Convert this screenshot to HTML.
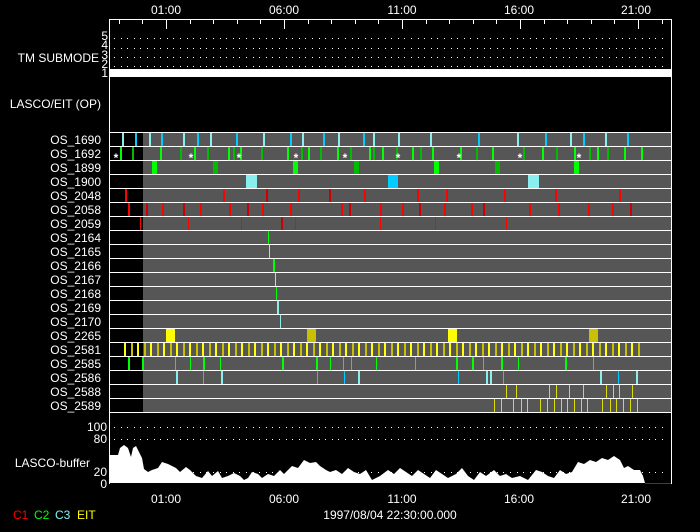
<!DOCTYPE html>
<html><head><meta charset="utf-8"><style>
html,body{margin:0;padding:0;background:#000;width:700px;height:532px;overflow:hidden}
svg{display:block}
text{font-family:"Liberation Sans",sans-serif;fill:#fff;font-size:12px}
</style></head><body>
<svg id="s" width="700" height="532" viewBox="0 0 700 532" xmlns="http://www.w3.org/2000/svg">
<rect width="700" height="532" fill="#000"/>
<g id="g"></g>
<line x1="109" y1="19.5" x2="671" y2="19.5" stroke="#fff"/>
<line x1="109.5" y1="19" x2="109.5" y2="484" stroke="#fff"/>
<line x1="671.5" y1="19" x2="671.5" y2="484" stroke="#fff"/>
<rect x="109" y="69" width="563" height="8" fill="#fff"/>
<text x="166" y="14" text-anchor="middle" font-size="13">01:00</text>
<text x="284" y="14" text-anchor="middle" font-size="13">06:00</text>
<text x="402" y="14" text-anchor="middle" font-size="13">11:00</text>
<text x="519" y="14" text-anchor="middle" font-size="13">16:00</text>
<text x="636" y="14" text-anchor="middle" font-size="13">21:00</text>
<text x="166" y="503" text-anchor="middle" font-size="13">01:00</text>
<text x="284" y="503" text-anchor="middle" font-size="13">06:00</text>
<text x="402" y="503" text-anchor="middle" font-size="13">11:00</text>
<text x="519" y="503" text-anchor="middle" font-size="13">16:00</text>
<text x="636" y="503" text-anchor="middle" font-size="13">21:00</text>
<text x="390" y="519" text-anchor="middle" font-size="13">1997/08/04 22:30:00.000</text>
<text x="99" y="62" text-anchor="end" font-size="13">TM SUBMODE</text>
<text x="101" y="108" text-anchor="end" font-size="13">LASCO/EIT (OP)</text>
<text x="108" y="40" text-anchor="end" font-size="10">5</text>
<text x="108" y="49" text-anchor="end" font-size="10">4</text>
<text x="108" y="59" text-anchor="end" font-size="10">3</text>
<text x="108" y="68" text-anchor="end" font-size="10">2</text>
<text x="108" y="77" text-anchor="end" font-size="10">1</text>
<text x="90" y="467" text-anchor="end" font-size="13">LASCO-buffer</text>
<text x="107" y="431" text-anchor="end" font-size="13">100</text>
<text x="107" y="443" text-anchor="end" font-size="13">80</text>
<text x="107" y="476" text-anchor="end" font-size="13">20</text>
<text x="107" y="488" text-anchor="end" font-size="13">0</text>
<text x="13" y="519" style="fill:#f00">C1</text>
<text x="34" y="519" style="fill:#0f0">C2</text>
<text x="55" y="519" style="fill:#8ee">C3</text>
<text x="77" y="519" style="fill:#ff0">EIT</text>
</svg>
<script>
var g=document.getElementById('g'),h='';
function R(x,y,w,hh,c){h+='<rect x="'+x+'" y="'+y+'" width="'+w+'" height="'+hh+'" fill="'+c+'"/>';}
for(var i=0;i<24;i++){var x=118.8+i*23.6;if(x>671)break;var maj=((i-2)%5==0);R(Math.round(x),20,1,maj?9:4,'#fff');}
[38,48,57,66,427,439,472].forEach(function(y){for(var x=114;x<668;x+=6.6)R(Math.round(x),y,1,1,'#fff');});
var names=['OS_1690','OS_1692','OS_1899','OS_1900','OS_2048','OS_2058','OS_2059','OS_2164','OS_2165','OS_2166','OS_2167','OS_2168','OS_2169','OS_2170','OS_2265','OS_2581','OS_2585','OS_2586','OS_2588','OS_2589'];
var t='';
for(var k=0;k<20;k++){var y=132+k*14;R(143,y,528,14,'#565656');R(109,y,563,1,'#fff');
t+='<text x="101" y="'+(y+12)+'" text-anchor="end" font-size="13">'+names[k]+'</text>';}
R(109,412,563,1,'#fff');
function row(k,list,w,col,col2){var y=133+k*14;list.forEach(function(x,i){R(x,y,w,13,(col2&&i%2)?col2:col);});}
var LC='#8ee',BC='#0cf',G='#0f0',DG='#0b0',RD='#f00',DR='#c00',Y='#ff0',OL='#c8c000';
row(0,[122,149,183,210,263,302,338,373,398,430,517,570,605],2,LC);
row(0,[135,161,197,236,290,323,363,478,545,583,627],2,BC);
row(1,[120,160,194,228,240,287,308,337,369,382,412,432,460,492,542,574,597,624,641],2,G);
row(1,[132,180,207,233,261,301,320,350,373,396,420,476,523,556,589,607],2,DG);
[116,191,239,296,345,398,459,520,579].forEach(function(x){t+='<text x="'+x+'" y="162" text-anchor="middle" font-size="11" font-weight="bold">*</text>';});
row(2,[152,293,434,574],5,G);row(2,[213,354,495],5,DG);
row(3,[246,528],11,LC);row(3,[388],10,BC);
row(4,[125,223,298,364,417,446,504,555,619],2,RD);row(4,[266,329],2,DR);
row(5,[128,162,200,229,262,290,341,380,402,444,471,529,558,588,612],2,RD);
row(5,[146,183,247,349,419,483,630],2,DR);
row(6,[140,188,241,295,380,435,506],1,RD);row(6,[281],2,DR);
row(7,[268],1,G);row(8,[269],1,LC);row(9,[273],2,G);row(10,[275],1,LC);row(11,[276],1,G);row(12,[277],2,LC);row(13,[280],1,LC);
row(14,[166,448],9,Y);row(14,[307,589],9,OL);
var yb=[];for(var x=124;x<642;x+=6.5)yb.push(Math.round(x));row(15,yb,2,Y,OL);
row(16,[128,142,203,282,316,456,472,501,565],2,G);row(16,[175,190,220,330,343,351,376,415,483,518,593],1,G);
row(17,[176,221,358,486,490,600,636],2,LC);row(17,[203,317,344,458,503,618],1,BC);
row(18,[506,516,549,556,569,583,606,613,619,632],1,'#dd0');
row(19,[494,501,513,521,527,540,547,554,561,567,574,581,587,602,610,616,623,630,637],1,'#dd0');
var pts=[[109,483],[109,455],[118,455],[120,448],[124,445],[128,448],[131,457],[133,448],[136,446],[139,452],[142,458],[144,469],[148,472],[152,470],[158,468],[162,462],[168,464],[176,468],[180,472],[186,467],[190,470],[196,476],[202,478],[208,471],[212,476],[218,471],[222,478],[228,476],[234,473],[240,476],[244,480],[248,478],[252,472],[258,474],[262,478],[268,474],[274,476],[280,470],[284,474],[288,470],[292,466],[298,468],[304,460],[310,463],[316,462],[320,466],[326,470],[330,472],[336,470],[342,474],[348,468],[354,472],[360,474],[366,470],[372,480],[380,476],[388,470],[394,474],[400,468],[406,472],[412,476],[418,470],[424,474],[430,478],[436,470],[442,474],[448,478],[456,474],[462,468],[468,476],[474,480],[480,472],[486,476],[494,470],[500,476],[506,474],[512,478],[520,476],[528,480],[536,470],[542,472],[548,476],[554,478],[560,470],[566,474],[572,472],[578,462],[584,464],[590,460],[596,462],[602,458],[608,460],[614,456],[620,460],[624,468],[628,466],[634,470],[640,470],[643,476],[645,483]];
h+='<path d="M'+pts.map(function(p){return p[0]+','+p[1]}).join('L')+'Z" fill="#fff"/>';
R(645,483,26,1,'#c00');
g.innerHTML=h+t;
</script>
</body></html>
